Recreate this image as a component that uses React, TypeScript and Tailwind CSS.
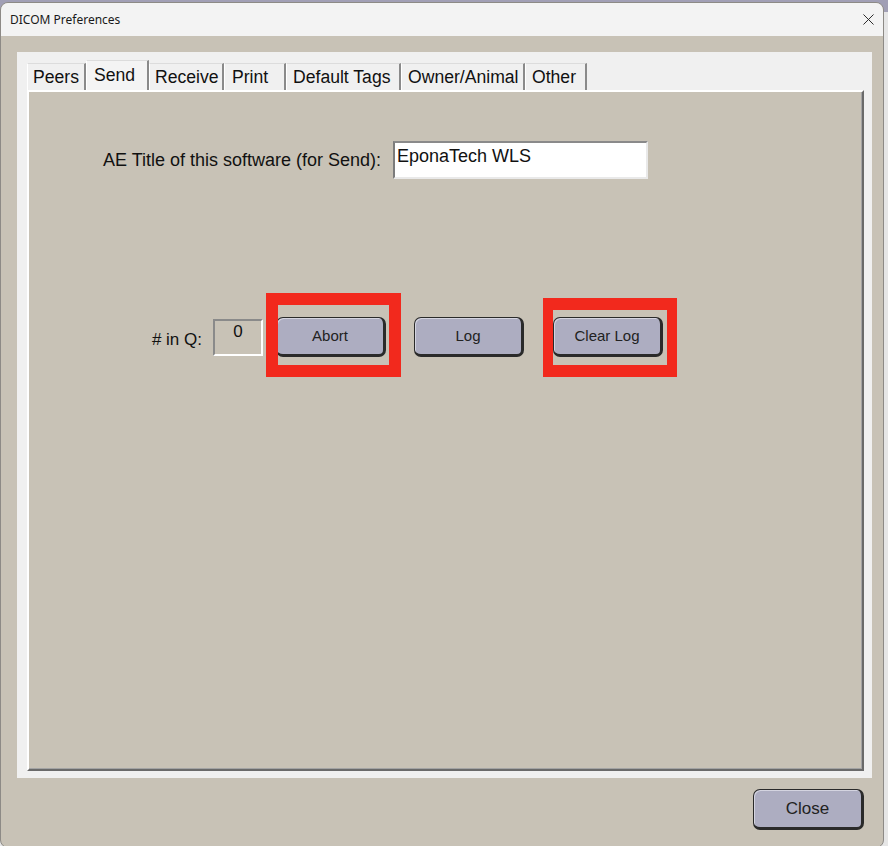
import { X } from "lucide-react";

const tabs = [
  { label: "Peers", w: "w-[59px]", pl: "pl-[5px]" },
  { label: "Send", w: "w-[63px]", pl: "pl-[7px]", active: true },
  { label: "Receive", w: "w-[75px]", pl: "pl-[5px]" },
  { label: "Print", w: "w-[62px]", pl: "pl-[7px]" },
  { label: "Default Tags", w: "w-[115px]", pl: "pl-[6px]" },
  { label: "Owner/Animal", w: "w-[124px]", pl: "pl-[6px]" },
  { label: "Other", w: "w-[62px]", pl: "pl-[6px]" },
];

function ClassicButton({ label, className = "" }: { label: string; className?: string }) {
  return (
    <button
      className={`h-[40px] w-[110px] rounded-[7px] border border-[#2a2a2a] border-b-[3px] border-r-[3px] bg-[#adadc1] text-[15px] text-[#222] shadow-[inset_1px_1px_0_#d4d4e0] ${className}`}
    >
      {label}
    </button>
  );
}

export default function App() {
  return (
    <div
      className="w-[888px] h-[846px] overflow-hidden bg-[linear-gradient(#a19fb5_0_12px,#e6e6e6_12px)] pt-[2px]"
      style={{ fontFamily: '"Liberation Sans", Arial, sans-serif' }}
    >
      <div className="flex h-[846px] w-[884px] flex-col overflow-hidden rounded-[8px] border border-[#8d8a86] bg-[#c8c2b6]">
        {/* Title bar */}
        <div className="flex h-[33px] shrink-0 items-center justify-between bg-[#f3f3f3] pl-[9px] pr-[5px]">
          <span className="text-[12px] text-[#1a1a1a]" style={{ fontFamily: '"Noto Sans", "Open Sans", sans-serif' }}>
            DICOM Preferences
          </span>
          <X className="h-[19px] w-[19px] text-[#222]" strokeWidth={1.2} />
        </div>

        {/* Body */}
        <div className="flex flex-col pl-[16px] pt-[16px]">
          {/* Tab panel */}
          <div className="flex h-[726px] w-[855px] flex-col bg-[#f0f0f0] pb-[7px] pl-[10px] pr-[8px] pt-[8px]">
            <div className="flex h-[30px] items-end">
              {tabs.map((t) => (
                <div
                  key={t.label}
                  className={`${t.w} ${t.pl} ${t.active ? "h-[30px] bg-[#f4f4f4]" : "h-[27px] bg-[#f0f0f0]"} flex items-center whitespace-nowrap border-l border-t border-l-white border-t-[#dcdcdc] border-r-2 border-r-[#8a8a8a] text-[17.6px] text-[#111]`}
                >
                  {t.label}
                </div>
              ))}
            </div>

            {/* Tab content */}
            <div className="flex flex-1 flex-col border-2 border-l-white border-t-white border-b-[#6a6a6a] border-r-[#6a6a6a] bg-[#c8c2b6] shadow-[inset_-1px_-1px_0_#a3a3a3]">
              <div className="mt-[49px] flex items-center pl-[74px]">
                <span className="w-[290px] whitespace-nowrap text-[18px] text-[#111]">AE Title of this software (for Send):</span>
                <div className="h-[38px] w-[255px] border-2 border-b-[#e9e9e9] border-l-[#7c7c7c] border-r-[#e9e9e9] border-t-[#8a8a8a] bg-white pl-[2px] pt-[2px] text-[18px] leading-[22px] text-[#111]">
                  EponaTech WLS
                </div>
              </div>

              <div className="mt-[138px] flex items-center pl-[111px]">
                <span className="mt-[6px] w-[62px] whitespace-nowrap text-right text-[17px] text-[#111]">{"# in Q:"}</span>
                <div className="ml-[11px] h-[37px] w-[50px] border-2 border-b-white border-l-[#8a8a8a] border-r-white border-t-[#8a8a8a] pt-0 text-center text-[17px] leading-[22px] text-[#111]">
                  0
                </div>
                <div className="relative ml-[13px]">
                  <ClassicButton label="Abort" />
                  <span className="pointer-events-none absolute left-[-10px] top-[-24px] h-[84px] w-[135px] border-[12px] border-[#f2291d]" />
                </div>
                <ClassicButton label="Log" className="ml-[28px]" />
                <div className="relative ml-[29px]">
                  <ClassicButton label="Clear Log" />
                  <span className="pointer-events-none absolute left-[-10px] top-[-19px] h-[79px] w-[134px] border-x-[10px] border-y-[12px] border-[#f2291d]" />
                </div>
              </div>
            </div>
          </div>

          <div className="flex justify-end pr-[19px] pt-[11px]">
            <button className="h-[41px] w-[111px] rounded-[7px] border border-[#2a2a2a] border-b-[3px] border-r-[3px] bg-[#adadc1] text-[17px] text-[#222] shadow-[inset_1px_1px_0_#d4d4e0]">
              Close
            </button>
          </div>
        </div>
      </div>
    </div>
  );
}
